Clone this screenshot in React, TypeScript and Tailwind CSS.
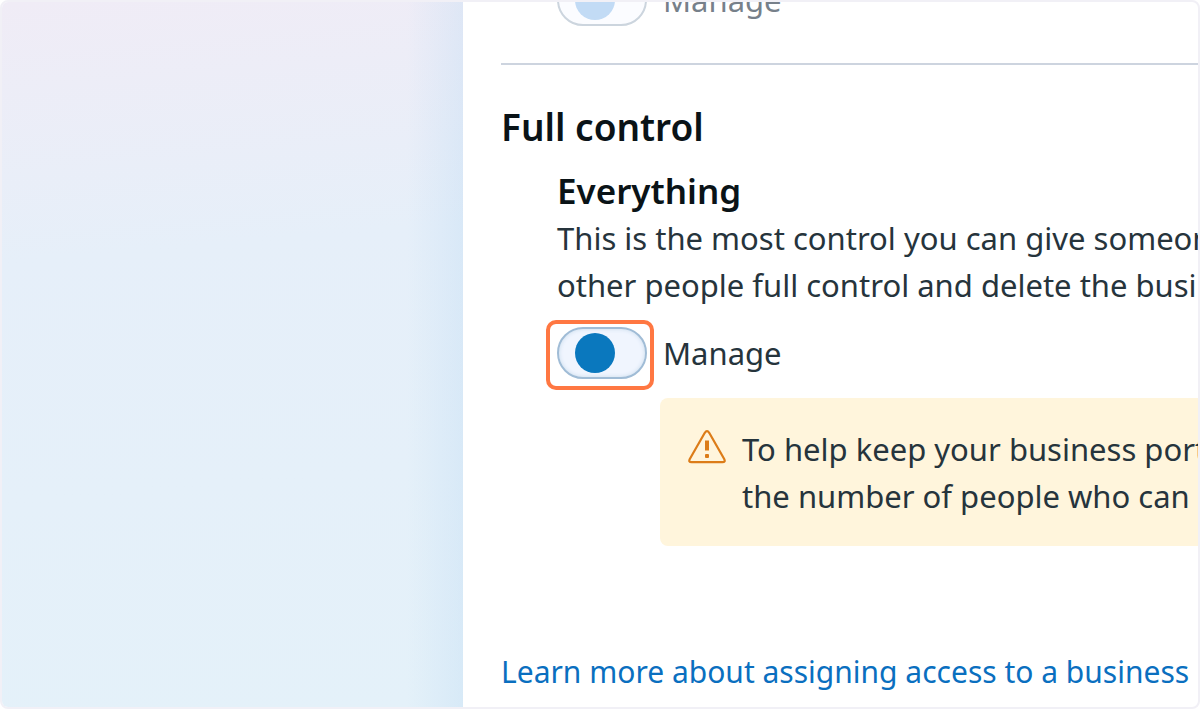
import { useState } from "react"

type ManageSwitchProps = {
  id: string
  disabled?: boolean
  highlighted?: boolean
}

function ManageSwitch({ id, disabled = false, highlighted = false }: ManageSwitchProps) {
  const [on, setOn] = useState(false)

  return (
    <div className="flex items-center gap-4">
      <div className="relative h-[52px] w-[90px] shrink-0">
        <input
          id={id}
          type="checkbox"
          role="switch"
          checked={on}
          disabled={disabled}
          onChange={(e) => setOn(e.target.checked)}
          className="block h-full w-full appearance-none rounded-full border-2 border-[#a0bcd6] bg-[#f0f5fe] px-4 py-1 shadow-[inset_0_0_4px_#c8dbec] before:block before:size-10 before:rounded-full before:bg-[#0a78be] checked:before:ml-auto disabled:border-[#ccd5de] disabled:bg-[#fbfcff] disabled:shadow-none disabled:before:bg-[#c2dbf5]"
        />
        {highlighted && (
          <span className="pointer-events-none absolute -top-[7px] -right-[7px] -bottom-[11px] -left-[11px] rounded-[10px] border-4 border-[#ff7742]" />
        )}
      </div>
      <label htmlFor={id} className={disabled ? "text-[#77808a]" : "text-[#26343c]"}>
        Manage
      </label>
    </div>
  )
}

function WarningIcon() {
  return (
    <svg viewBox="0 0 38 34" fill="none" className="h-[34px] w-[38px] shrink-0" aria-hidden="true">
      <path
        d="M16.8 2.8 1.8 29Q0.2 32.2 3.6 32.2H34.4Q37.8 32.2 36.2 29L21.2 2.8Q19 -0.4 16.8 2.8Z"
        stroke="#dc7c18"
        strokeWidth="2.2"
        strokeLinejoin="round"
      />
      <path d="M17 10.5h4v10h-4z" fill="#dc7c18" />
      <rect x="17" y="24" width="4" height="4" rx="1" fill="#dc7c18" />
    </svg>
  )
}

export default function App() {
  return (
    <div className="flex h-screen overflow-hidden rounded-lg border-2 border-[#f1f0f6] bg-white font-['Noto_Sans',sans-serif] text-[31px] leading-[47px] text-[#26343c]">
      <aside className="w-[461px] shrink-0 bg-linear-175 from-[#f0ecf6] via-[#e6eff9] via-35% to-[#e4f1f9]">
        <div className="ml-auto h-full w-14 bg-linear-to-r from-transparent to-[#c0dcf4]/35" />
      </aside>

      <main className="min-w-0 flex-1 overflow-hidden pl-[38px] whitespace-nowrap">
        <div className="-mt-7 ml-14">
          <ManageSwitch id="partial-manage" disabled />
        </div>

        <hr className="mt-[37px] border-t-2 border-[#cdd4df]" />

        <section>
          <h2 className="mt-[38px] text-[37px] leading-[48px] font-semibold text-[#0a1317]">
            Full control
          </h2>
          <div className="ml-14">
            <h3 className="mt-4 text-[35px] leading-[48px] font-semibold text-[#0a1317]">
              Everything
            </h3>
            <p className="mb-[18px]">
              This is the most control you can give someone. They can give
              <br />
              other people full control and delete the business portfolio.
            </p>
            <ManageSwitch id="full-manage" highlighted />
            <div
              role="note"
              className="mt-[19px] ml-[103px] flex gap-4 rounded-l-lg bg-[#fff5dc] pt-7 pb-[26px] pl-7"
            >
              <div className="pt-1">
                <WarningIcon />
              </div>
              <p>
                To help keep your business portfolio secure, limit
                <br />
                the number of people who can control everything.
              </p>
            </div>
          </div>
        </section>

        <a href="#" className="mt-[102px] block text-[30px] text-[#0a6fbf]">
          Learn more about assigning access to a business
        </a>
      </main>
    </div>
  )
}
